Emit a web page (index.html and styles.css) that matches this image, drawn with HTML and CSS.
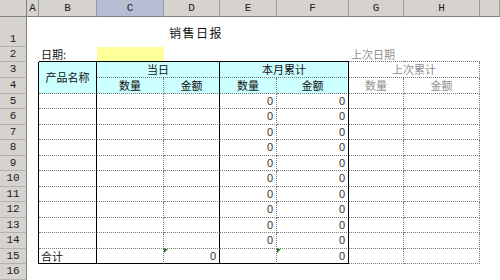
FILE: index.html
```html
<!DOCTYPE html>
<html lang="zh-CN">
<head>
    <meta charset="UTF-8">
    <title>销售日报</title>
    <link rel="stylesheet" href="styles.css">
</head>
<body>
    <table class="sheet">
        <colgroup>
            <col class="w-rh"><col class="w-a"><col class="w-b"><col class="w-c"><col class="w-d">
            <col class="w-e"><col class="w-f"><col class="w-g"><col class="w-h"><col class="w-i">
        </colgroup>
        <tr class="r-head">
            <th class="corner"></th>
            <th class="ch">A</th><th class="ch">B</th><th class="ch sel">C</th><th class="ch">D</th>
            <th class="ch">E</th><th class="ch">F</th><th class="ch">G</th><th class="ch">H</th><th class="ch"></th>
        </tr>
        <tr class="r-title">
            <th class="rh tall">1</th>
            <td></td><td></td><td></td><td class="title">销售日报</td><td></td><td></td><td></td><td></td><td></td>
        </tr>
        <tr class="r15">
            <th class="rh">2</th>
            <td></td><td class="hs">日期:</td><td class="hs date"></td><td class="hs"></td><td class="hs"></td><td class="hs"></td>
            <td class="hd muted">上次日期</td><td class="hd"></td><td></td>
        </tr>
        <tr class="r16">
            <th class="rh">3</th>
            <td class="vs"></td>
            <td class="vs hd fill mid" rowspan="2">产品名称</td>
            <td class="vs hd fill mid" colspan="2">当日</td>
            <td class="vs hd fill mid" colspan="2">本月累计</td>
            <td class="vd hd mid muted" colspan="2">上次累计</td>
            <td></td>
        </tr>
        <tr class="r16">
            <th class="rh">4</th>
            <td class="vs"></td>
            <td class="vd hd fill mid">数量</td><td class="vs hd fill mid">金额</td>
            <td class="vd hd fill mid">数量</td><td class="vs hd fill mid">金额</td>
            <td class="vd hd mid muted">数量</td><td class="vd hd mid muted">金额</td>
            <td></td>
        </tr>
        <tr class="r15">
            <th class="rh">5</th>
            <td class="vs"></td><td class="vs hd"></td><td class="vd hd"></td><td class="vs hd"></td>
            <td class="vd hd num">0</td><td class="vs hd num">0</td><td class="vd hd"></td><td class="vd hd"></td><td></td>
        </tr>
        <tr class="r16">
            <th class="rh">6</th>
            <td class="vs"></td><td class="vs hd"></td><td class="vd hd"></td><td class="vs hd"></td>
            <td class="vd hd num">0</td><td class="vs hd num">0</td><td class="vd hd"></td><td class="vd hd"></td><td></td>
        </tr>
        <tr class="r15">
            <th class="rh">7</th>
            <td class="vs"></td><td class="vs hd"></td><td class="vd hd"></td><td class="vs hd"></td>
            <td class="vd hd num">0</td><td class="vs hd num">0</td><td class="vd hd"></td><td class="vd hd"></td><td></td>
        </tr>
        <tr class="r16">
            <th class="rh">8</th>
            <td class="vs"></td><td class="vs hd"></td><td class="vd hd"></td><td class="vs hd"></td>
            <td class="vd hd num">0</td><td class="vs hd num">0</td><td class="vd hd"></td><td class="vd hd"></td><td></td>
        </tr>
        <tr class="r15">
            <th class="rh">9</th>
            <td class="vs"></td><td class="vs hd"></td><td class="vd hd"></td><td class="vs hd"></td>
            <td class="vd hd num">0</td><td class="vs hd num">0</td><td class="vd hd"></td><td class="vd hd"></td><td></td>
        </tr>
        <tr class="r16">
            <th class="rh">10</th>
            <td class="vs"></td><td class="vs hd"></td><td class="vd hd"></td><td class="vs hd"></td>
            <td class="vd hd num">0</td><td class="vs hd num">0</td><td class="vd hd"></td><td class="vd hd"></td><td></td>
        </tr>
        <tr class="r15">
            <th class="rh">11</th>
            <td class="vs"></td><td class="vs hd"></td><td class="vd hd"></td><td class="vs hd"></td>
            <td class="vd hd num">0</td><td class="vs hd num">0</td><td class="vd hd"></td><td class="vd hd"></td><td></td>
        </tr>
        <tr class="r16">
            <th class="rh">12</th>
            <td class="vs"></td><td class="vs hd"></td><td class="vd hd"></td><td class="vs hd"></td>
            <td class="vd hd num">0</td><td class="vs hd num">0</td><td class="vd hd"></td><td class="vd hd"></td><td></td>
        </tr>
        <tr class="r15">
            <th class="rh">13</th>
            <td class="vs"></td><td class="vs hd"></td><td class="vd hd"></td><td class="vs hd"></td>
            <td class="vd hd num">0</td><td class="vs hd num">0</td><td class="vd hd"></td><td class="vd hd"></td><td></td>
        </tr>
        <tr class="r16">
            <th class="rh">14</th>
            <td class="vs"></td><td class="vs hd"></td><td class="vd hd"></td><td class="vs hd"></td>
            <td class="vd hd num">0</td><td class="vs hd num">0</td><td class="vd hd"></td><td class="vd hd"></td><td></td>
        </tr>
        <tr class="r15">
            <th class="rh">15</th>
            <td class="vs"></td><td class="vs hs">合计</td><td class="vd hs"></td><td class="vs hs num flag">0</td>
            <td class="vd hs"></td><td class="vs hs num flag">0</td><td class="vd hd"></td><td class="vd hd"></td><td></td>
        </tr>
        <tr class="r16">
            <th class="rh">16</th>
            <td></td><td></td><td></td><td></td><td></td><td></td><td></td><td></td><td></td>
        </tr>
    </table>
</body>
</html>
```

FILE: styles.css
```css
body {
    margin: 0;
    background: #fff;
    overflow: hidden;
    font-family: "Noto Sans CJK SC", sans-serif;
}
.sheet {
    table-layout: fixed;
    border-collapse: separate;
    border-spacing: 0;
    width: 500px;
}
.w-rh { width: 27px; }
.w-a { width: 12px; }
.w-b { width: 58px; }
.w-c { width: 67px; }
.w-d { width: 56px; }
.w-e { width: 57px; }
.w-f { width: 72px; }
.w-g { width: 55px; }
.w-h { width: 76px; }
.w-i { width: 20px; }

.sheet td, .sheet th {
    box-sizing: border-box;
    padding: 0 2px;
    font-size: 11px;
    line-height: 13px;
    font-weight: normal;
    color: #111;
    white-space: nowrap;
    overflow: visible;
    vertical-align: middle;
}
.r-head { height: 17px; }
.r-title { height: 30px; }
.r15 { height: 15px; }
.r16 { height: 16px; }

/* headers */
.sheet .corner, .sheet .ch, .sheet .rh {
    background-color: #d6d3ce;
    font-family: "Liberation Mono", monospace;
    color: #222;
    padding: 0;
}
.sheet .corner {
    border-right: 1px solid #808080;
    border-bottom: 1px solid #808080;
}
.sheet .ch {
    text-align: center;
    border-right: 1px solid #9a9a9a;
    border-bottom: 1px solid #808080;
}
.sheet .ch.sel {
    background-color: #b7bdd3;
}
.sheet .rh {
    text-align: center;
    border-right: 1px solid #808080;
    border-bottom: 1px solid #b4b1ab;
}
.sheet .rh.tall {
    vertical-align: top;
    padding-top: 16px;
}

/* cell borders */
.vs { border-right: 1px solid #000; }
.vd { border-right: 1px dotted #7a7a7a; }
.hs { border-bottom: 1px solid #000; }
.hd { border-bottom: 1px dotted #7a7a7a; }

.sheet .title {
    font-size: 12px;
    padding-left: 5px;
    letter-spacing: 1.5px;
}
.sheet .date { background-color: #ffff99; }
.sheet .fill { background-color: #ccffff; }
.sheet .mid { text-align: center; }
.sheet .muted { color: #8f8f8f; }
.sheet .num {
    text-align: right;
    font-family: "Liberation Sans", Arial, sans-serif;
    font-size: 11px;
    color: #333;
    padding-right: 3px;
}
.flag { position: relative; }
.flag::before {
    content: "";
    position: absolute;
    left: 0;
    top: 0;
    border-top: 4px solid #1f7a1f;
    border-right: 4px solid transparent;
}
```
